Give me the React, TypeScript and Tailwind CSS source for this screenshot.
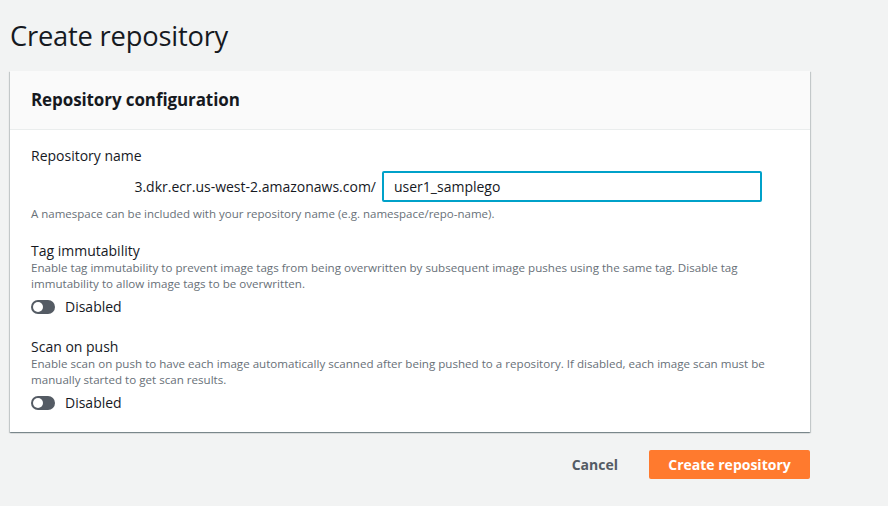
import { useState } from 'react'

function Toggle({ label }: { label: string }) {
  return (
    <div className="mt-[4px] flex items-center">
      <span className="relative inline-flex h-[14px] w-[24px] items-center rounded-full bg-[#545b64]">
        <span className="absolute left-[2px] h-[10px] w-[10px] rounded-full bg-white" />
      </span>
      <span className="ml-[10px] text-[14px] text-[#16191f]">{label}</span>
    </div>
  )
}

function App() {
  const [repoName, setRepoName] = useState<string>('user1_samplego')

  return (
    <div
      className="min-h-screen w-[888px] h-[506px] overflow-hidden bg-[#f2f3f3] text-[#16191f]"
      style={{ fontFamily: '"Open Sans", "Noto Sans", Arial, sans-serif' }}
    >
      {/* Page title */}
      <h1 className="pl-[10px] pt-[16px] text-[27.3px] leading-[40px] font-normal tracking-[-0.2px]">
        Create repository
      </h1>

      {/* Card */}
      <div className="ml-[10px] mt-[15px] w-[800px] bg-white shadow-[0_1px_1px_0_rgba(0,28,36,0.3),1px_1px_1px_0_rgba(0,28,36,0.15),-1px_1px_1px_0_rgba(0,28,36,0.15)]">
        <div className="h-[59px] flex items-center px-[21px] bg-[#fafafa] border-b border-[#eaeded]">
          <h2 className="text-[17px] font-bold tracking-[-0.1px]">Repository configuration</h2>
        </div>

        <div className="px-[21px] pt-[16px] pb-[19px]">
          {/* Repository name */}
          <div>
            <label htmlFor="repo-name" className="block text-[14px] leading-[20px]">
              Repository name
            </label>
            <div className="mt-[5px] flex items-center">
              <span className="w-[351px] text-right text-[14px] pr-[6px]">
                3.dkr.ecr.us-west-2.amazonaws.com/
              </span>
              <div className="w-[380px] h-[31px] flex items-center rounded-[2px] border-2 border-[#00a1c9] pl-[10px]">
                <input
                  id="repo-name"
                  value={repoName}
                  onChange={(e) => setRepoName(e.target.value)}
                  className="w-full text-[14px] outline-none bg-transparent"
                />
              </div>
            </div>
            <p className="mt-[3px] text-[11.5px] text-[#687078]">
              A namespace can be included with your repository name (e.g. namespace/repo-name).
            </p>
          </div>

          {/* Tag immutability */}
          <div className="mt-[20px]">
            <p className="text-[14px] leading-[18px]">Tag immutability</p>
            <p className="text-[11.6px] leading-[16px] text-[#687078]">
              Enable tag immutability to prevent image tags from being overwritten by subsequent image pushes using the same tag. Disable tag immutability to allow image tags to be overwritten.
            </p>
            <Toggle label="Disabled" />
          </div>

          {/* Scan on push */}
          <div className="mt-[21px]">
            <p className="text-[14px] leading-[18px]">Scan on push</p>
            <p className="text-[11.6px] leading-[16px] text-[#687078]">
              Enable scan on push to have each image automatically scanned after being pushed to a repository. If disabled, each image scan must be manually started to get scan results.
            </p>
            <Toggle label="Disabled" />
          </div>
        </div>
      </div>

      {/* Actions */}
      <div className="w-[810px] mt-[18px] flex items-center justify-end">
        <button className="mr-[31px] text-[14px] font-bold text-[#545b64]">Cancel</button>
        <button className="h-[29px] w-[161px] rounded-[2px] bg-[#ff7a2e] text-[14px] font-bold text-white">
          Create repository
        </button>
      </div>
    </div>
  )
}

export default App
